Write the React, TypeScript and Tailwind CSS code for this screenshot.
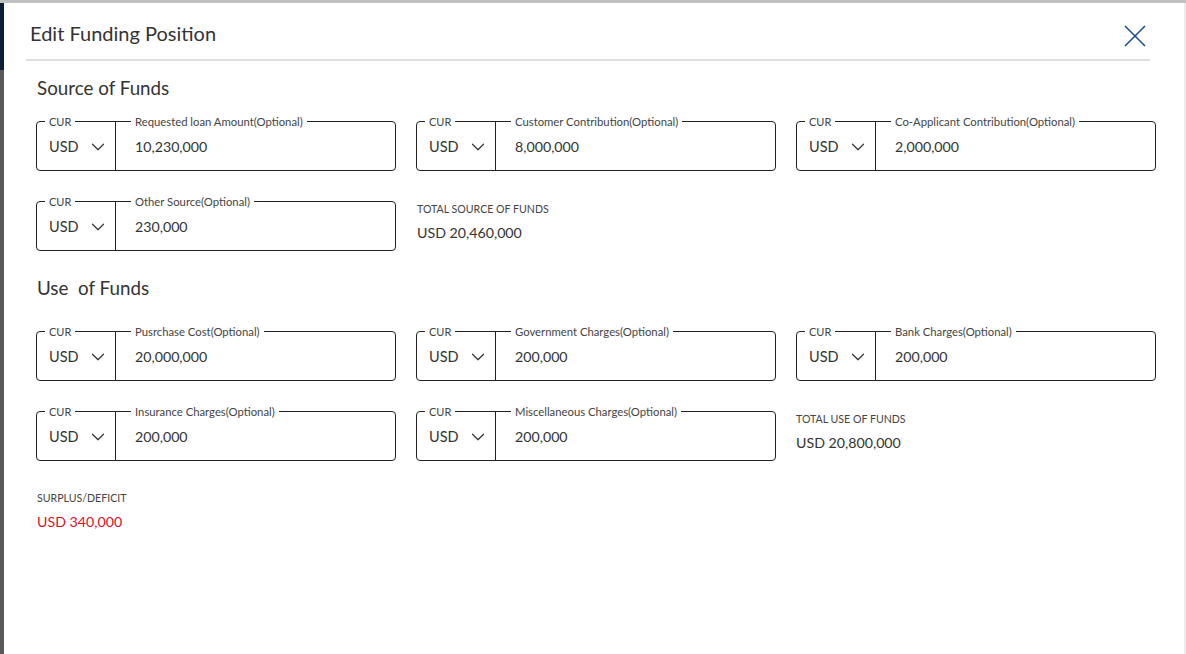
import { ChevronDown } from "lucide-react";

interface FieldProps {
  label: string;
  value: string;
}

const font = "font-['Lato','Noto_Sans',sans-serif]";

const AmountField = ({ label, value }: FieldProps) => {
  return (
    <div className="flex h-[50px] w-[360px] rounded-[4px] border border-[#222]">
      <div className="relative flex w-[79px] items-center justify-between border-r border-[#222] pl-[12px] pr-[6px] pt-[2px]">
        <span className="absolute -top-[7px] left-[8px] bg-white px-[4px] text-[11px] leading-[14px] text-[#444]">
          CUR
        </span>
        <span className="text-[14.5px] text-[#333]">USD</span>
        <ChevronDown size={22} strokeWidth={1.3} className="text-[#333]" />
      </div>
      <div className="relative flex flex-1 items-center pl-[19px] pt-[2px]">
        <span className="absolute -top-[7px] left-[15px] bg-white px-[4px] text-[11.3px] leading-[14px] text-[#444]">
          {label}
        </span>
        <span className="text-[14.2px] text-[#333]">{value}</span>
      </div>
    </div>
  );
};

const Total = ({ label, value, red }: { label: string; value: string; red?: boolean }) => {
  return (
    <div className="w-[360px] pt-[1px]">
      <div className="text-[10.6px] leading-[14px] text-[#444]">{label}</div>
      <div
        className={
          red
            ? "mt-[7px] text-[14.2px] leading-[20px] text-[#e0102a]"
            : "mt-[7px] text-[14.2px] leading-[20px] text-[#333]"
        }
      >
        {value}
      </div>
    </div>
  );
};

const App = () => {
  return (
    <div className={`h-[654px] w-[1186px] overflow-hidden bg-[#595959] ${font}`}>
      <div className="h-[3px] bg-[#c1c1c1]"></div>
      <div className="flex h-[651px]">
        {/* page behind the overlay */}
        <div className="w-[4px]">
          <div className="h-[67px] bg-[#0c1e36]"></div>
        </div>

        {/* modal */}
        <div className="flex-1 border-r-2 border-[#ececec] bg-white">
          <div className="flex h-[56px] items-center justify-between pl-[26px] pr-[38px] pt-[3px]">
            <h1 className="text-[20px] text-[#333]">Edit Funding Position</h1>
            <button className="mt-[7px] text-[#1d4f8c]">
              <svg width="22" height="22" viewBox="0 0 22 22" fill="none" stroke="currentColor" strokeWidth="1.6">
                <line x1="1" y1="1" x2="21" y2="21" />
                <line x1="21" y1="1" x2="1" y2="21" />
              </svg>
            </button>
          </div>
          <div className="ml-[22px] mr-[34px] h-[2px] bg-[#dedede]"></div>

          <div className="pl-[32px]">
            <h2 className="mt-[15px] pl-[1px] text-[18.8px] leading-[24px] text-[#333]">Source of Funds</h2>
            <div className="mt-[21px] flex gap-[20px]">
              <AmountField label="Requested loan Amount(Optional)" value="10,230,000" />
              <AmountField label="Customer Contribution(Optional)" value="8,000,000" />
              <AmountField label="Co-Applicant Contribution(Optional)" value="2,000,000" />
            </div>
            <div className="mt-[30px] flex gap-[20px]">
              <AmountField label="Other Source(Optional)" value="230,000" />
              <div className="pl-[1px]">
                <Total label="TOTAL SOURCE OF FUNDS" value="USD 20,460,000" />
              </div>
            </div>

            <h2 className="mt-[25px] whitespace-pre pl-[1px] text-[18.8px] leading-[24px] text-[#333]">
              {"Use  of Funds"}
            </h2>
            <div className="mt-[31px] flex gap-[20px]">
              <AmountField label="Pusrchase Cost(Optional)" value="20,000,000" />
              <AmountField label="Government Charges(Optional)" value="200,000" />
              <AmountField label="Bank Charges(Optional)" value="200,000" />
            </div>
            <div className="mt-[30px] flex gap-[20px]">
              <AmountField label="Insurance Charges(Optional)" value="200,000" />
              <AmountField label="Miscellaneous Charges(Optional)" value="200,000" />
              <Total label="TOTAL USE OF FUNDS" value="USD 20,800,000" />
            </div>

            <div className="mt-[29px] pl-[1px]">
              <Total label="SURPLUS/DEFICIT" value="USD 340,000" red />
            </div>
          </div>
        </div>
      </div>
    </div>
  );
};

export default App;
